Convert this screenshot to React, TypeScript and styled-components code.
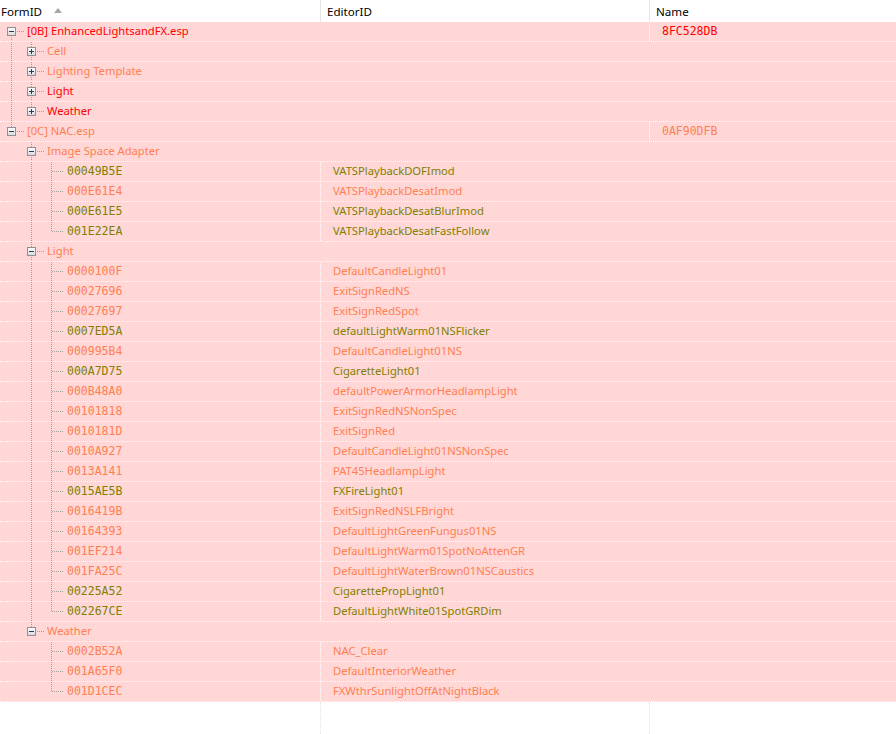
import React from 'react';
import styled, { createGlobalStyle } from 'styled-components';

const GlobalStyle = createGlobalStyle`
  html, body { margin: 0; padding: 0; background: #fff; }
  body { font-family: "Segoe UI", "Noto Sans", sans-serif; font-size: 11.2px; }
  #root { height: 100vh; }
`;

const PINK = '#ffd7d7';
const RED = '#ff0000';
const CORAL = '#ff7f50';
const OLIVE = '#808000';
const MONO = '"DejaVu Sans Mono", "Liberation Mono", monospace';

type Kind = 'file' | 'group' | 'leaf';

interface TreeNode {
  label: string;
  color: string;
  kind: Kind;
  name?: string;
  editorId?: string;
  expanded?: boolean;
  children?: TreeNode[];
}

const leaf = (label: string, editorId: string, color: string): TreeNode => ({ label, editorId, color, kind: 'leaf' });

const tree: TreeNode[] = [
  {
    label: '[0B] EnhancedLightsandFX.esp', name: '8FC528DB', color: RED, kind: 'file', expanded: true,
    children: [
      { label: 'Cell', color: CORAL, kind: 'group', children: [] },
      { label: 'Lighting Template', color: CORAL, kind: 'group', children: [] },
      { label: 'Light', color: RED, kind: 'group', children: [] },
      { label: 'Weather', color: RED, kind: 'group', children: [] },
    ],
  },
  {
    label: '[0C] NAC.esp', name: '0AF90DFB', color: CORAL, kind: 'file', expanded: true,
    children: [
      {
        label: 'Image Space Adapter', color: CORAL, kind: 'group', expanded: true,
        children: [
          leaf('00049B5E', 'VATSPlaybackDOFImod', OLIVE),
          leaf('000E61E4', 'VATSPlaybackDesatImod', CORAL),
          leaf('000E61E5', 'VATSPlaybackDesatBlurImod', OLIVE),
          leaf('001E22EA', 'VATSPlaybackDesatFastFollow', OLIVE),
        ],
      },
      {
        label: 'Light', color: CORAL, kind: 'group', expanded: true,
        children: [
          leaf('0000100F', 'DefaultCandleLight01', CORAL),
          leaf('00027696', 'ExitSignRedNS', CORAL),
          leaf('00027697', 'ExitSignRedSpot', CORAL),
          leaf('0007ED5A', 'defaultLightWarm01NSFlicker', OLIVE),
          leaf('000995B4', 'DefaultCandleLight01NS', CORAL),
          leaf('000A7D75', 'CigaretteLight01', OLIVE),
          leaf('000B48A0', 'defaultPowerArmorHeadlampLight', CORAL),
          leaf('00101818', 'ExitSignRedNSNonSpec', CORAL),
          leaf('0010181D', 'ExitSignRed', CORAL),
          leaf('0010A927', 'DefaultCandleLight01NSNonSpec', CORAL),
          leaf('0013A141', 'PAT45HeadlampLight', CORAL),
          leaf('0015AE5B', 'FXFireLight01', OLIVE),
          leaf('0016419B', 'ExitSignRedNSLFBright', CORAL),
          leaf('00164393', 'DefaultLightGreenFungus01NS', CORAL),
          leaf('001EF214', 'DefaultLightWarm01SpotNoAttenGR', CORAL),
          leaf('001FA25C', 'DefaultLightWaterBrown01NSCaustics', CORAL),
          leaf('00225A52', 'CigarettePropLight01', OLIVE),
          leaf('002267CE', 'DefaultLightWhite01SpotGRDim', OLIVE),
        ],
      },
      {
        label: 'Weather', color: CORAL, kind: 'group', expanded: true,
        children: [
          leaf('0002B52A', 'NAC_Clear', CORAL),
          leaf('001A65F0', 'DefaultInteriorWeather', CORAL),
          leaf('001D1CEC', 'FXWthrSunlightOffAtNightBlack', CORAL),
        ],
      },
    ],
  },
];

interface FlatRow {
  node: TreeNode;
  guides: boolean[];
  hasPrev: boolean;
  hasNext: boolean;
}

const flatten = (nodes: TreeNode[], guides: boolean[], out: FlatRow[], root: boolean) => {
  nodes.forEach((node, i) => {
    const hasNext = i < nodes.length - 1;
    out.push({ node, guides, hasPrev: !(root && i === 0), hasNext });
    if (node.expanded && node.children) flatten(node.children, [...guides, hasNext], out, false);
  });
  return out;
};

const rows = flatten(tree, [], [], true);

const Page = styled.div`
  display: flex;
  flex-direction: column;
  height: 100%;
  background: #fff;
`;

const Header = styled.div`
  display: grid;
  grid-template-columns: 321px 329px 1fr;
  height: 22px;
  background: #fff;
  color: #000;
  font-size: 11.6px;
`;

const HeaderCell = styled.div<{ $first?: boolean; $last?: boolean }>`
  display: flex;
  align-items: center;
  gap: 12px;
  padding-left: ${p => (p.$first ? '1px' : '6px')};
  border-right: ${p => (p.$last ? 'none' : '1px solid #e5e5e5')};
  white-space: nowrap;
`;

const SortArrow = styled.span`
  width: 0;
  height: 0;
  border-left: 4px solid transparent;
  border-right: 4px solid transparent;
  border-bottom: 5px solid #a7a7a7;
  margin-top: -1px;
`;

const Row = styled.div<{ $kind: Kind }>`
  display: grid;
  grid-template-columns: ${p =>
    p.$kind === 'leaf' ? '320px 329px 1fr' : p.$kind === 'file' ? '649px 1fr' : '1fr'};
  height: 20px;
  box-sizing: border-box;
  background: ${PINK};
  border-bottom: 1px dotted #fff;
`;

const TreeCell = styled.div`
  display: flex;
  align-items: stretch;
  padding-left: 1px;
  min-width: 0;
  overflow: hidden;
`;

const Label = styled.span<{ $color: string; $mono?: boolean }>`
  display: flex;
  align-items: center;
  color: ${p => p.$color};
  white-space: nowrap;
  font-family: ${p => (p.$mono ? MONO : 'inherit')};
  font-size: ${p => (p.$mono ? '11.5px' : 'inherit')};
  padding-bottom: ${p => (p.$mono ? '1px' : '3px')};
`;

const ColumnCell = styled.div<{ $color: string; $mono?: boolean; $line?: boolean }>`
  display: flex;
  align-items: center;
  padding-left: 12px;
  border-left: ${p => (p.$line ? '1px dotted #fff' : '1px solid transparent')};
  color: ${p => p.$color};
  white-space: nowrap;
  font-family: ${p => (p.$mono ? MONO : 'inherit')};
  font-size: ${p => (p.$mono ? '11.5px' : 'inherit')};
  padding-bottom: ${p => (p.$mono ? '1px' : '3px')};
`;

const Filler = styled.div`
  flex: 1;
  display: grid;
  grid-template-columns: 320px 329px 1fr;
`;

const FillerCol = styled.div<{ $line?: boolean }>`
  border-left: ${p => (p.$line ? '1px dotted #e3e3e3' : 'none')};
`;

const LINE = '#a0a0a0';

const Guide: React.FC<{ on: boolean }> = ({ on }) => (
  <svg width={20} height={19} style={{ flex: 'none' }} shapeRendering="crispEdges">
    {on && <line x1={10.5} y1={0} x2={10.5} y2={19} stroke={LINE} strokeDasharray="1 1" />}
  </svg>
);

const Connector: React.FC<{ row: FlatRow }> = ({ row }) => {
  const box = row.node.kind !== 'leaf';
  const open = !!row.node.expanded;
  return (
    <svg width={26} height={19} style={{ flex: 'none' }} shapeRendering="crispEdges">
      {row.hasPrev && (
        <line x1={10.5} y1={0} x2={10.5} y2={box ? 5 : 10} stroke={LINE} strokeDasharray="1 1" />
      )}
      {row.hasNext && (
        <line x1={10.5} y1={box ? 15 : 10} x2={10.5} y2={19} stroke={LINE} strokeDasharray="1 1" />
      )}
      <line x1={box ? 16 : 11} y1={9.5} x2={23} y2={9.5} stroke={LINE} strokeDasharray="1 1" />
      {box && (
        <g>
          <defs>
            <linearGradient id="exp" x1="0" y1="0" x2="0" y2="1">
              <stop offset="0" stopColor="#ffffff" />
              <stop offset="1" stopColor="#d8d8d8" />
            </linearGradient>
          </defs>
          <rect x={6.5} y={5.5} width={8} height={8} fill="url(#exp)" stroke="#8f8f9c" />
          <line x1={8} y1={9.5} x2={13} y2={9.5} stroke="#2b3a5a" />
          {!open && <line x1={10.5} y1={7} x2={10.5} y2={12} stroke="#2b3a5a" />}
        </g>
      )}
    </svg>
  );
};

const TreeRow: React.FC<{ row: FlatRow }> = ({ row }) => {
  const { node } = row;
  return (
    <Row $kind={node.kind}>
      <TreeCell>
        {row.guides.map((g, i) => (
          <Guide key={i} on={g} />
        ))}
        <Connector row={row} />
        <Label $color={node.color} $mono={node.kind === 'leaf'}>{node.label}</Label>
      </TreeCell>
      {node.kind === 'file' && (
        <ColumnCell $color={node.color} $mono $line>{node.name}</ColumnCell>
      )}
      {node.kind === 'leaf' && (
        <>
          <ColumnCell $color={node.color} $line>{node.editorId}</ColumnCell>
          <ColumnCell $color={node.color} />
        </>
      )}
    </Row>
  );
};

const App: React.FC = () => (
  <>
    <GlobalStyle />
    <Page>
      <Header>
        <HeaderCell $first>
          FormID <SortArrow />
        </HeaderCell>
        <HeaderCell>EditorID</HeaderCell>
        <HeaderCell $last>Name</HeaderCell>
      </Header>
      {rows.map((r, i) => (
        <TreeRow key={i} row={r} />
      ))}
      <Filler>
        <FillerCol />
        <FillerCol $line />
        <FillerCol $line />
      </Filler>
    </Page>
  </>
);

export default App;
